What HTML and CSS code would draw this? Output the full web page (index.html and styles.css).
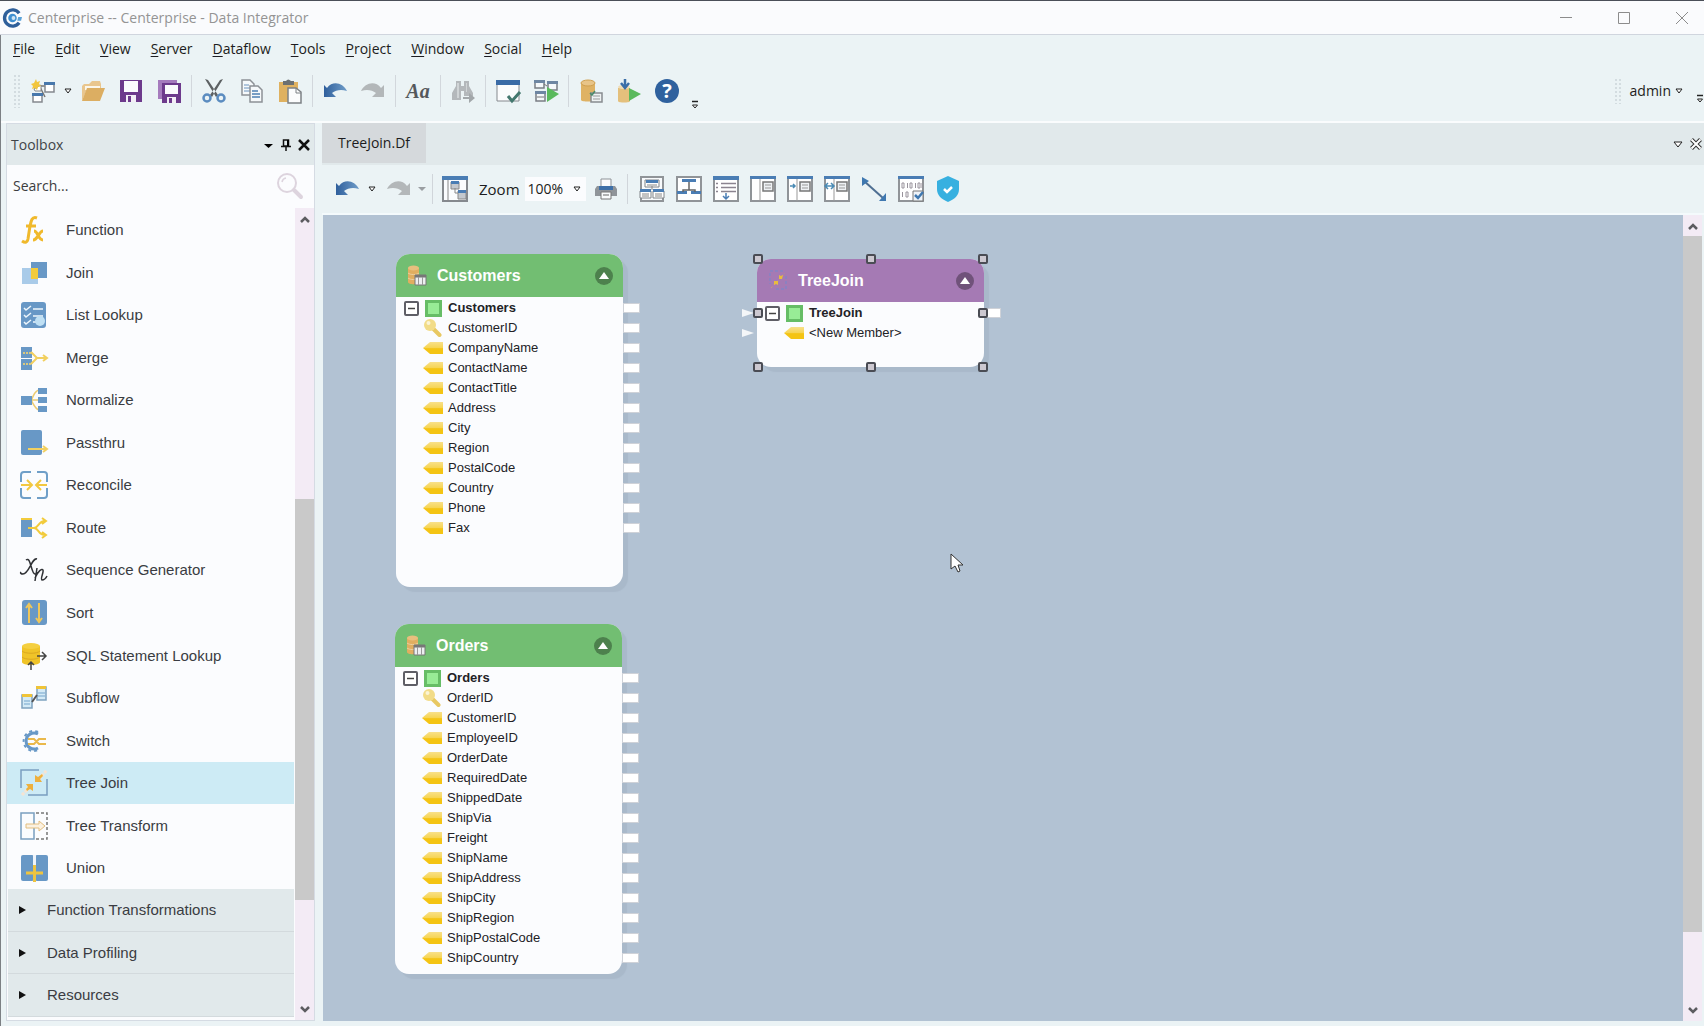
FILE: index.html
```html
<!DOCTYPE html>
<html lang="en">
<head>
<meta charset="utf-8">
<title>Centerprise - Data Integrator</title>
<link rel="stylesheet" href="styles.css">
</head>
<body>
<svg class="defs" aria-hidden="true">
  <defs>
    <linearGradient id="g-blue" x1="0" x2="1"><stop offset="0" stop-color="#2f5f9c"/><stop offset="1" stop-color="#6f9cc8"/></linearGradient>
    <linearGradient id="g-tag" x1="0" y1="0" x2="0" y2="1"><stop offset="0" stop-color="#f8e08a"/><stop offset=".5" stop-color="#f6d452"/><stop offset=".55" stop-color="#f4c414"/><stop offset="1" stop-color="#f4c414"/></linearGradient>
    <symbol id="undo" viewBox="0 0 24 24"><path d="M1 6v12h12l-4-4c4-3 9-4 15-2C20 4 10 1 4 9z" fill="url(#g-blue)"/></symbol>
    <symbol id="redo" viewBox="0 0 24 24"><path d="M23 6v12H11l4-4c-4-3-9-4-15-2C4 4 14 1 20 9z" fill="#b3b7b9"/></symbol>
    <symbol id="caret-o" viewBox="0 0 8 8"><path d="M1 2h6L4 6z" fill="#fff" stroke="#222"/></symbol>
    <symbol id="overflow" viewBox="0 0 8 10"><path d="M1 1.500h6" stroke="#222" stroke-width="1.500"/><path d="M1.500 5h5L4 8z" fill="#fff" stroke="#222"/></symbol>
    <symbol id="chev-up" viewBox="0 0 12 8"><path d="M2 7l4-4 4 4" fill="none" stroke="#5c5c60" stroke-width="2.500"/></symbol>
    <symbol id="chev-down" viewBox="0 0 12 8"><path d="M2 1l4 4 4-4" fill="none" stroke="#5c5c60" stroke-width="2.500"/></symbol>
    <symbol id="database" viewBox="0 0 24 24">
      <path d="M2 4v17c0 2 14 2 14 0V4z" fill="#dfb264"/><ellipse cx="9" cy="4" rx="7" ry="3" fill="#e8c488" stroke="#d0a050"/>
      <path d="M12 14h11v9H12z" fill="#eef2f3" stroke="#888c90" stroke-width="1.500"/><path d="M14 17h7M14 20h7" stroke="#999"/><path d="M11 14l2 2 3-4" fill="none" stroke="#4a8a6a" stroke-width="1.500"/>
    </symbol>
    <symbol id="node-db" viewBox="0 0 20 21">
      <path d="M1 3v14c0 3 11 3 11 0V3z" fill="#e0ae60"/><ellipse cx="6.500" cy="3" rx="5.500" ry="2.500" fill="#e8bf7e"/><path d="M1 8c2 2 9 2 11 0M1 13c2 2 9 2 11 0" fill="none" stroke="#ecd0a0"/>
      <path d="M8 10h11v10H8z" fill="#eceef0" stroke="#777"/><path d="M8 10h11v2.500H8z" fill="#777"/><path d="M11.500 12v8M15.500 12v8" stroke="#999"/>
    </symbol>
    <symbol id="tag" viewBox="0 0 20 12"><path d="M0 6l7-6h13v12H7z" fill="url(#g-tag)"/></symbol>
    <symbol id="key" viewBox="0 0 19 18"><path d="M9 9l7 7" stroke="#e8c862" stroke-width="4" stroke-linecap="round"/><circle cx="6.500" cy="6" r="6" fill="#f2dc88"/><circle cx="5" cy="4" r="2" fill="#fbf4d4"/></symbol>
    <symbol id="minus" viewBox="0 0 15 15"><rect x="1" y="1" width="13" height="13" rx="1" fill="#fff" stroke="#5e5e66" stroke-width="2"/><path d="M4 7.500h7" stroke="#444" stroke-width="1.500"/></symbol>
    <symbol id="square" viewBox="0 0 17 17"><path d="M0 0h17v17H0z" fill="#66bd66"/><path d="M3 3h11v11H3z" fill="#98ec96"/></symbol>
    <symbol id="up" viewBox="0 0 18 18"><circle cx="9" cy="9" r="9" fill="#000" fill-opacity=".32"/><path d="M4 12l5-7 5 7z" fill="#fff"/></symbol>
  </defs>
</svg>

<div class="app">
  <header class="titlebar">
    <svg class="logo" viewBox="0 0 20 20"><path d="M17 5A8.500 8.500 0 1 0 17 15" fill="none" stroke="#2e5f9a" stroke-width="3.500"/><circle cx="10" cy="10" r="4.500" fill="#3f8fd0"/><circle cx="11" cy="10" r="2" fill="#cfe4f4"/><path d="M16 9h4l-1 4h-4z" fill="#5aa2d8"/></svg>
    <h1>Centerprise -- Centerprise - Data Integrator</h1>
    <div class="window-buttons">
      <button aria-label="Minimize"><svg viewBox="0 0 12 12"><path d="M0 5.500h12"/></svg></button>
      <button aria-label="Maximize"><svg viewBox="0 0 12 12"><path d="M.500.500h11v11H.500z"/></svg></button>
      <button aria-label="Close"><svg viewBox="0 0 12 12"><path d="M0 0l12 12M12 0L0 12"/></svg></button>
    </div>
  </header>

  <div class="shell">
    <nav class="menu">
      <button><u>F</u>ile</button><button><u>E</u>dit</button><button><u>V</u>iew</button><button><u>S</u>erver</button><button><u>D</u>ataflow</button><button><u>T</u>ools</button><button><u>P</u>roject</button><button><u>W</u>indow</button><button><u>S</u>ocial</button><button><u>H</u>elp</button>
    </nav>

    <div class="toolbar">
      <span class="grip"></span>
      <div class="group">
        <button class="tool" aria-label="New dataflow"><svg viewBox="0 0 24 24"><path d="M10 7l5 0M8 6l6 12" stroke="#777" stroke-width="1.500"/><path d="M14 4h9v9h-9zM2 15h9v8H2z" fill="#fff" stroke="#85898e" stroke-width="1.500"/><path d="M13 3h11v3H13zM1 14h11v3H1z" fill="#4878ac"/><path d="M3 10l1 2h6V6z" fill="#fff" stroke="#888"/><path d="M5 0l1 3 3-1-1 3 2 2-3 1-1 3-2-2-3 1 1-3-2-2 3-1z" fill="#f2c63e"/></svg></button>
        <button class="drop" aria-label="New options"><svg><use href="#caret-o"/></svg></button>
        <button class="tool" aria-label="Open"><svg viewBox="0 0 24 24"><path d="M1 22V7l2-2h5l3-3h8l1 3v5H6z" fill="#e9c68e"/><path d="M4 7h15v4H4z" fill="#fbf6ea"/><path d="M1 22L6 9h18l-5 13z" fill="#dcae62"/></svg></button>
        <button class="tool" aria-label="Save"><svg viewBox="0 0 24 24"><path d="M1 1h22v22H1z" fill="#6d3a8c"/><path d="M5 2h14v11H5z" fill="#fbfbfd"/><path d="M7 16h10v7H7z" fill="#f3eef6"/><path d="M9 17h3v6H9z" fill="#6d3a8c"/></svg></button>
        <button class="tool" aria-label="Save all"><svg viewBox="0 0 24 24"><path d="M1 1h19v19H1z" fill="#a57bbd"/><path d="M5 4h19v20H5z" fill="#6d3a8c"/><path d="M8 6h13v9H8z" fill="#fbfbfd"/><path d="M10 18h9v6h-9z" fill="#f3eef6"/><path d="M12 19h3v5h-3z" fill="#6d3a8c"/></svg></button>
      </div>
      <div class="group">
        <button class="tool" aria-label="Cut"><svg viewBox="0 0 24 24"><path d="M3 0l3 1 10 15-2 2zM21 0l-3 1L8 16l2 2z" fill="#5d6163"/><circle cx="5" cy="19" r="3.500" fill="none" stroke="#5b8cc0" stroke-width="2.500"/><circle cx="19" cy="19" r="3.500" fill="none" stroke="#5b8cc0" stroke-width="2.500"/></svg></button>
        <button class="tool" aria-label="Copy"><svg viewBox="0 0 24 24"><path d="M2 1h8l4 4v11H2z" fill="#f6f9fb" stroke="#8d9196" stroke-width="1.500"/><path d="M4 6h5M4 9h8M4 12h8" stroke="#6a92bd"/><path d="M10 7h8l4 4v12H10z" fill="#f6f9fb" stroke="#8d9196" stroke-width="1.500"/><path d="M12 12h6M12 15h8M12 18h8" stroke="#4f80b4" stroke-width="1.500"/></svg></button>
        <button class="tool" aria-label="Paste"><svg viewBox="0 0 24 24"><path d="M1 3h19v20H1z" fill="#dfb160"/><path d="M5 2h3q2-3 5 0h3v4H5z" fill="#6c7072"/><path d="M10 9h8l5 4v11H10z" fill="#fbfcfd" stroke="#7d8185" stroke-width="1.500"/><path d="M18 9v5h5" fill="none" stroke="#7d8185"/></svg></button>
      </div>
      <div class="group">
        <button class="tool" aria-label="Undo"><svg><use href="#undo"/></svg></button>
        <button class="tool" aria-label="Redo"><svg><use href="#redo"/></svg></button>
      </div>
      <div class="group"><button class="tool font-tool">Aa</button></div>
      <div class="group">
        <button class="tool" aria-label="Find"><svg viewBox="0 0 24 24"><path d="M5 2h5v5h3V2h5v5l4 7v3H13v-5h-3v9H1v-7l4-7z" fill="#b4b8bb"/><path d="M6 4h2v15H6zM15 4h1v9h-1z" fill="#d0d4d6"/><path d="M12 18h6v-4l6 5-6 5v-4h-6z" fill="#a2a7aa"/></svg></button>
      </div>
      <div class="group">
        <button class="tool" aria-label="Verify"><svg viewBox="0 0 24 24"><path d="M1 2h22v20H1z" fill="#fbfcfd" stroke="#85898e"/><path d="M0 1h24v5H0z" fill="#3a6ba6"/><path d="M12 17l4 5 8-9" fill="none" stroke="#44786f" stroke-width="3"/></svg></button>
        <button class="tool" aria-label="Start dataflow"><svg viewBox="0 0 24 24"><path d="M1 2h9v7H1zM14 3h9v8h-9zM2 13h9v9H2z" fill="#f5f8fa" stroke="#7a7e84" stroke-width="1.500"/><path d="M0 1h11v3H0zM13 2h11v3H13zM1 12h11v3H1z" fill="#6e86a2"/><path d="M3 18h7M10 5l3 2" stroke="#777"/><path d="M13 8l12 7-12 8z" fill="#5ab95c"/></svg></button>
      </div>
      <div class="group last">
        <button class="tool" aria-label="Data source"><svg><use href="#database"/></svg></button>
        <button class="tool" aria-label="Generate job"><svg viewBox="0 0 24 24"><path d="M1 9v13c0 2 12 2 12 0V9z" fill="#e4c07c"/><ellipse cx="7" cy="8" rx="6" ry="2" fill="#f0dcb4"/><path d="M8 0v7M4 4l4 5 4-5" fill="none" stroke="#3a6ea8" stroke-width="2.500"/><path d="M12 9l12 6-12 7z" fill="#5ab95c"/></svg></button>
        <button class="tool help" aria-label="Help">?</button>
      </div>
      <button class="more" aria-label="More tools"><svg><use href="#overflow"/></svg></button>
      <div class="user">
        <span class="grip"></span>
        <button class="user-name">admin <svg><use href="#caret-o"/></svg></button>
        <button class="more" aria-label="More options"><svg><use href="#overflow"/></svg></button>
      </div>
    </div>

    <main class="work">
      <aside class="toolbox">
        <div class="panel-head">
          <h2>Toolbox</h2>
          <button aria-label="Panel menu"><svg viewBox="0 0 12 12"><path d="M2 5h9l-4.500 4z"/></svg></button>
          <button aria-label="Pin"><svg viewBox="0 0 12 12"><path d="M3.500 1h5v6h-5zM1 7.500h10M6 7v5" fill="none" stroke="#111" stroke-width="1.500"/><path d="M7 1h2v6H7z"/></svg></button>
          <button aria-label="Close panel"><svg viewBox="0 0 12 12"><path d="M1 1l10 10M11 1L1 11" stroke="#111" stroke-width="2.500"/></svg></button>
        </div>
        <label class="search"><input type="text" aria-label="Search tools" placeholder="Search...">
          <svg viewBox="0 0 28 28"><circle cx="11" cy="11" r="9" fill="none" stroke="#ddd4de" stroke-width="2"/><path d="M6 10a5 5 0 0 1 4-4" fill="none" stroke="#ddd4de" stroke-width="1.500"/><path d="M18 18l7 7" stroke="#ddd4de" stroke-width="4" stroke-linecap="round"/></svg>
        </label>
        <div class="tree">
          <div class="rows">
            <button class="item"><svg viewBox="0 0 28 28"><path d="M17 2c-5-2-6 3-7 8L8 23c-1 4-3 4-6 2M6 10h10" fill="none" stroke="#f0b92c" stroke-width="3"/><path d="M14 15c4 0 4 9 9 9M23 15c-4 0-5 9-10 9" fill="none" stroke="#f0b92c" stroke-width="3"/></svg>Function</button>
            <button class="item"><svg viewBox="0 0 28 28"><path d="M11 3h16v16H11z" fill="#6898c6"/><path d="M2 9h16v16H2z" fill="#a9cbe9"/><path d="M11 9h7v11h-7z" fill="#f2cb3c"/></svg>Join</button>
            <button class="item"><svg viewBox="0 0 28 28"><rect x="1" y="1" width="25" height="26" rx="3" fill="#6898c6"/><path d="M4 7l2 2 5-4M4 14l2 2 5-4M4 21l2 2 5-4M13 8h10M13 15h10M13 21h5" fill="none" stroke="#eef6fc" stroke-width="1.500"/><circle cx="20" cy="20" r="5" fill="#bfe0f4"/></svg>List Lookup</button>
            <button class="item"><svg viewBox="0 0 28 28"><path d="M1 3h11v11H1zM1 15h11v11H1z" fill="#6898c6"/><path d="M11 8l6 6h10M11 20l6-6M23 11l4 3-4 3" fill="none" stroke="#f2d060" stroke-width="2"/><path d="M3 9h8M3 20h8" stroke="#d8c880" stroke-width="2" stroke-dasharray="2 1"/></svg>Merge</button>
            <button class="item"><svg viewBox="0 0 28 28"><path d="M19 4c-5 1-5 6-8 10 3 5 4 9 8 10M11 14h8" fill="none" stroke="#eccb70" stroke-width="1.500"/><path d="M1 10h11v9H1zM18 2h9v6h-9zM18 11h9v6h-9zM18 20h9v6h-9z" fill="#6898c6"/></svg>Normalize</button>
            <button class="item"><svg viewBox="0 0 28 28"><rect x="1" y="1" width="21" height="25" rx="2" fill="#6898c6"/><path d="M8 20h19M23 17l4 3-4 3" fill="none" stroke="#f2d060" stroke-width="2"/></svg>Passthru</button>
            <button class="item"><svg viewBox="0 0 28 28"><path d="M11 1H4Q1 1 1 4v7M17 1h7q3 0 3 3v7M11 27H4q-3 0-3-3v-7M17 27h7q3 0 3-3v-7" fill="none" stroke="#6f9fc8" stroke-width="2"/><path d="M1 14h10M7 9l5 5-5 5M27 14H17M21 9l-5 5 5 5" fill="none" stroke="#f2c840" stroke-width="2"/></svg>Reconcile</button>
            <button class="item"><svg viewBox="0 0 28 28"><path d="M1 5h11v18H1z" fill="#6898c6"/><path d="M1 5h11" stroke="#f2cb3c" stroke-width="2"/><path d="M8 14h6c5 0 4-7 11-7M14 14c5 0 4 7 11 7M22 4l4 3-4 3M22 18l4 3-4 3" fill="none" stroke="#f2cb3c" stroke-width="2"/></svg>Route</button>
            <button class="item"><svg viewBox="0 0 28 28"><path d="M6 4c5-4 5 14 9 14 1 0 2-1 2-2M17 3c-5-2-8 15-14 15-2 0-3-1-2-2M17 12l-2 13M15 22c3-7 7-10 8-8s-3 9-1 10c2 0 4-2 5-4" fill="none" stroke="#303236" stroke-width="1.500"/></svg>Sequence Generator</button>
            <button class="item"><svg viewBox="0 0 28 28"><rect x="2" y="1" width="25" height="25" rx="3" fill="#6898c6"/><path d="M9 24V6M6 9l3-4 3 4M19 4v18M16 19l3 4 3-4" fill="none" stroke="#eec65a" stroke-width="2"/></svg>Sort</button>
            <button class="item"><svg viewBox="0 0 28 28"><path d="M2 4v16c0 4 18 4 18 0V4z" fill="#f0c428"/><ellipse cx="11" cy="4" rx="9" ry="3" fill="#f4cf40"/><path d="M2 9c3 3 15 3 18 0M2 15c3 3 15 3 18 0" fill="none" stroke="#dba820"/><path d="M17 14h8M22 10l4 4-4 4M11 28v-7M8 23l3-3 3 3" fill="none" stroke="#444" stroke-width="1.500"/></svg>SQL Statement Lookup</button>
            <button class="item"><svg viewBox="0 0 28 28"><path d="M17 3h9v13h-9zM2 11h10v13H2z" fill="#d4eaf6" stroke="#7fa2c0" stroke-width="1.500"/><path d="M16 2h10v3H16zM2 10h10v3H2z" fill="#f0c438"/><path d="M18 9h7M18 12h7M4 17h6M4 20h6" stroke="#74a5cc"/><path d="M12 18l5-7" stroke="#555" stroke-width="2"/></svg>Subflow</button>
            <button class="item"><svg viewBox="0 0 28 28"><path d="M18 7a8 8 0 1 0 0 14" fill="none" stroke="#6898c6" stroke-width="3"/><path d="M18 5a10 10 0 1 0 0 18" fill="none" stroke="#6898c6" stroke-width="2" stroke-dasharray="3 3"/><path d="M8 12h6l5 5h7M8 17h6l5-5h7" fill="none" stroke="#eab94c" stroke-width="2"/></svg>Switch</button>
            <button class="item selected"><svg viewBox="0 0 28 28"><path d="M19 1H1v18M27 10v16H8" fill="none" stroke="#7a9fc0" stroke-width="1.500"/><path d="M2 26l8-8M19 10l8-9" stroke="#f6e4d2" stroke-width="3" stroke-dasharray="3 1"/><path d="M6 15h7v7l-3-2-3 2-1-2 2-2zM15 13V6l3 2 4-3 1 2-3 3 2 3z" fill="#eeb03c"/></svg>Tree Join</button>
            <button class="item"><svg viewBox="0 0 28 28"><path d="M1 1h13v26H1z" fill="#fafcfe" stroke="#7a9fc0" stroke-width="1.500"/><path d="M16 1h11v26H15" fill="none" stroke="#777" stroke-width="1.500" stroke-dasharray="3 2"/><path d="M6 12h13V9l6 5-6 5v-3H6z" fill="#fbf1e0" stroke="#e2be80"/></svg>Tree Transform</button>
            <button class="item"><svg viewBox="0 0 28 28"><rect x="1" y="1" width="13" height="26" rx="2" fill="#6898c6"/><rect x="15" y="1" width="13" height="26" rx="2" fill="#6898c6"/><path d="M13 1h3v13h-3z" fill="#eef4fa"/><path d="M6 19h17M14.500 11v17" stroke="#eec440" stroke-width="3"/></svg>Union</button>
            <button class="section"><svg viewBox="0 0 7 8"><path d="M0 0l7 4-7 4z"/></svg>Function Transformations</button>
            <button class="section"><svg viewBox="0 0 7 8"><path d="M0 0l7 4-7 4z"/></svg>Data Profiling</button>
            <button class="section"><svg viewBox="0 0 7 8"><path d="M0 0l7 4-7 4z"/></svg>Resources</button>
          </div>
          <div class="scroll side">
            <svg><use href="#chev-up"/></svg><div class="track"><div class="thumb"></div></div><svg><use href="#chev-down"/></svg>
          </div>
        </div>
      </aside>

      <section class="document">
        <div class="tabs">
          <button class="tab">TreeJoin.Df</button>
          <div class="tab-tools">
            <button aria-label="Window list"><svg viewBox="0 0 12 12"><path d="M2 4h8L6 9z" fill="#fff" stroke="#222"/></svg></button>
            <button aria-label="Close tab"><svg viewBox="0 0 12 12"><path d="M1.500 1.500l9 9M10.500 1.500l-9 9" stroke="#333" stroke-width="4"/><path d="M1.500 1.500l9 9M10.500 1.500l-9 9" stroke="#fff" stroke-width="2"/></svg></button>
          </div>
        </div>
        <div class="flowbar">
          <button class="tool" aria-label="Undo"><svg><use href="#undo"/></svg></button>
          <button class="drop" aria-label="Undo history"><svg><use href="#caret-o"/></svg></button>
          <button class="tool" aria-label="Redo"><svg><use href="#redo"/></svg></button>
          <button class="drop muted" aria-label="Redo history"><svg viewBox="0 0 8 8"><path d="M0 2h8L4 6z"/></svg></button>
          <i class="rule"></i>
          <button class="tool wide" aria-label="Overview"><svg viewBox="0 0 26 26"><path d="M1 1h24v24H1z" fill="#fafcfe" stroke="#85898e" stroke-width="2"/><path d="M0 0h26v4H0z" fill="#4a7db4"/><path d="M6 4v21" stroke="#888"/><path d="M9 6h8v7H9zM16 15h8v8h-8z" fill="#c3c8ce" stroke="#888"/><path d="M9 5h8v3H9zM16 14h8v3h-8z" fill="#4a7db4"/><path d="M13 12v5h3" fill="none" stroke="#888"/></svg></button>
          <label class="zoom-label" for="zoom">Zoom</label>
          <span class="zoom"><select id="zoom"><option>100%</option></select><svg><use href="#caret-o"/></svg></span>
          <button class="tool" aria-label="Print"><svg viewBox="0 0 24 24"><path d="M7 2h10v9H7z" fill="#fafcfd" stroke="#8f9398"/><path d="M3 9h18l2 3v7H1v-7z" fill="#8f9499"/><path d="M5 9h14v4H5z" fill="#3e70a8"/><path d="M7 15h10v7H7z" fill="#fafcfd" stroke="#777"/><path d="M9 18h6" stroke="#666"/></svg></button>
          <i class="rule"></i>
          <div class="views">
            <button class="tool wide" aria-label="Layout"><svg viewBox="0 0 26 26"><path d="M2 1h22v24H2z" fill="#f8fafc" stroke="#909498" stroke-width="2"/><path d="M6 4h14v7H6zM1 15h11v7H1zM14 15h11v7H14z" fill="#fff" stroke="#808488"/><path d="M7 4h12v3H7zM1 13h11v3H1zM14 13h11v3H14z" fill="#4a7db4"/><path d="M3 18h7M3 20h7M16 18h7M16 20h7M8 9h10M13 10v4" stroke="#888"/></svg></button>
            <button class="tool wide" aria-label="Hierarchy"><svg viewBox="0 0 26 26"><path d="M1 1h24v24H1z" fill="#fff" stroke="#909498" stroke-width="2"/><path d="M6 3h14v3H6zM1 15h10v3H1zM15 15h10v3H15z" fill="#4a7db4"/><path d="M13 6v8M7 16v-2h12v2" fill="none" stroke="#666" stroke-width="1.500"/></svg></button>
            <button class="tool wide" aria-label="Expand list"><svg viewBox="0 0 26 26"><path d="M1 1h24v24H1z" fill="#fff" stroke="#909498" stroke-width="2"/><path d="M0 0h26v4H0z" fill="#4a7db4"/><path d="M3 7.500h2M3 11.500h2M3 15.500h2M8 7.500h15M8 11.500h15M8 15.500h15" stroke="#8b8490" stroke-width="1.500"/><path d="M13 17v6M10 20l3 3 3-3" fill="none" stroke="#4a7db4" stroke-width="1.500"/></svg></button>
            <button class="tool wide" aria-label="Panel view"><svg viewBox="0 0 26 26"><path d="M1 1h24v24H1z" fill="#fff" stroke="#909498" stroke-width="2"/><path d="M0 0h26v3H0z" fill="#4a7db4"/><path d="M10 3v22" stroke="#999"/><path d="M13 6h10v9H13z" fill="#eef1f4" stroke="#777" stroke-width="1.500"/><path d="M15 9h6M15 12h6" stroke="#999"/></svg></button>
            <button class="tool wide" aria-label="Expand panel"><svg viewBox="0 0 26 26"><path d="M1 1h24v24H1z" fill="#fff" stroke="#909498" stroke-width="2"/><path d="M0 0h26v3H0z" fill="#4a7db4"/><path d="M10 3v22" stroke="#999"/><path d="M13 6h10v9H13z" fill="#eef1f4" stroke="#777" stroke-width="1.500"/><path d="M15 9h6M15 12h6" stroke="#999"/><path d="M3 10h5M6 8l2 2-2 2" fill="none" stroke="#4a8ab4" stroke-width="1.500"/></svg></button>
            <button class="tool wide" aria-label="Fit panel"><svg viewBox="0 0 26 26"><path d="M1 1h24v24H1z" fill="#fff" stroke="#909498" stroke-width="2"/><path d="M0 0h26v3H0z" fill="#4a7db4"/><path d="M10 3v22" stroke="#999"/><path d="M13 6h10v9H13z" fill="#eef1f4" stroke="#777" stroke-width="1.500"/><path d="M15 9h6M15 12h6" stroke="#999"/><path d="M1 10h8M4 7l-3 3 3 3M7 7l3 3-3 3" fill="none" stroke="#4a8ab4" stroke-width="1.500"/></svg></button>
            <button class="tool wide" aria-label="Connector"><svg viewBox="0 0 26 26"><path d="M3 5l19 17" stroke="#4f6f92" stroke-width="2"/><path d="M1 1l7 4-7 5zM25 17v8h-7z" fill="#3f78b0"/></svg></button>
            <button class="tool wide" aria-label="Data preview"><svg viewBox="0 0 26 26"><path d="M1 1h24v24H1z" fill="#fff" stroke="#909498" stroke-width="2"/><path d="M0 0h26v3H0z" fill="#4a7db4"/><path d="M4 7h2v5H4zM12 7h2v5h-2zM20 7h2v5h-2zM8 16h2v5H8z" fill="none" stroke="#99939c"/><path d="M9.500 7v5M17.500 7v5M24 7v5M4.500 16v5" stroke="#99939c"/><path d="M15 15h10v10H15z" fill="#eef3f8" stroke="#777"/><path d="M17 19l3 3 5-6" fill="none" stroke="#3f78b0" stroke-width="2.500"/></svg></button>
            <button class="tool wide" aria-label="Data quality"><svg viewBox="0 0 26 26"><path d="M13 0l11 5v8c0 6-4 10-11 13C6 23 2 19 2 13V5z" fill="#37b0e0"/><path d="M9 13l3 3 5-5" fill="none" stroke="#fff" stroke-width="2.500"/></svg></button>
          </div>
        </div>

        <div class="stage">
          <div class="canvas">
            <article class="node customers">
              <header><svg class="kind"><use href="#node-db"/></svg><h3>Customers</h3><button aria-label="Collapse Customers"><svg><use href="#up"/></svg></button></header>
              <ul>
                <li class="root port"><svg class="toggle"><use href="#minus"/></svg><svg class="sq"><use href="#square"/></svg>Customers</li>
                <li class="port"><svg class="key"><use href="#key"/></svg>CustomerID</li>
                <li class="port"><svg class="tag"><use href="#tag"/></svg>CompanyName</li>
                <li class="port"><svg class="tag"><use href="#tag"/></svg>ContactName</li>
                <li class="port"><svg class="tag"><use href="#tag"/></svg>ContactTitle</li>
                <li class="port"><svg class="tag"><use href="#tag"/></svg>Address</li>
                <li class="port"><svg class="tag"><use href="#tag"/></svg>City</li>
                <li class="port"><svg class="tag"><use href="#tag"/></svg>Region</li>
                <li class="port"><svg class="tag"><use href="#tag"/></svg>PostalCode</li>
                <li class="port"><svg class="tag"><use href="#tag"/></svg>Country</li>
                <li class="port"><svg class="tag"><use href="#tag"/></svg>Phone</li>
                <li class="port"><svg class="tag"><use href="#tag"/></svg>Fax</li>
              </ul>
            </article>

            <article class="node orders">
              <header><svg class="kind"><use href="#node-db"/></svg><h3>Orders</h3><button aria-label="Collapse Orders"><svg><use href="#up"/></svg></button></header>
              <ul>
                <li class="root port"><svg class="toggle"><use href="#minus"/></svg><svg class="sq"><use href="#square"/></svg>Orders</li>
                <li class="port"><svg class="key"><use href="#key"/></svg>OrderID</li>
                <li class="port"><svg class="tag"><use href="#tag"/></svg>CustomerID</li>
                <li class="port"><svg class="tag"><use href="#tag"/></svg>EmployeeID</li>
                <li class="port"><svg class="tag"><use href="#tag"/></svg>OrderDate</li>
                <li class="port"><svg class="tag"><use href="#tag"/></svg>RequiredDate</li>
                <li class="port"><svg class="tag"><use href="#tag"/></svg>ShippedDate</li>
                <li class="port"><svg class="tag"><use href="#tag"/></svg>ShipVia</li>
                <li class="port"><svg class="tag"><use href="#tag"/></svg>Freight</li>
                <li class="port"><svg class="tag"><use href="#tag"/></svg>ShipName</li>
                <li class="port"><svg class="tag"><use href="#tag"/></svg>ShipAddress</li>
                <li class="port"><svg class="tag"><use href="#tag"/></svg>ShipCity</li>
                <li class="port"><svg class="tag"><use href="#tag"/></svg>ShipRegion</li>
                <li class="port"><svg class="tag"><use href="#tag"/></svg>ShipPostalCode</li>
                <li class="port"><svg class="tag"><use href="#tag"/></svg>ShipCountry</li>
              </ul>
            </article>

            <article class="node treejoin">
              <header><svg class="kind" viewBox="0 0 20 21"><path d="M15 1H2v13M18 6v13H6" fill="none" stroke="#8484c4" stroke-width="1.500" stroke-dasharray="3 2"/><path d="M3 18l14-15" stroke="#c89a78" stroke-dasharray="2 2"/><path d="M6 11h4v4l-2-1-2 1zM11 9V5l2 1 2-1-1 4z" fill="#e8bc3e"/></svg><h3>TreeJoin</h3><button aria-label="Collapse TreeJoin"><svg><use href="#up"/></svg></button></header>
              <ul>
                <li class="root port in"><svg class="toggle"><use href="#minus"/></svg><svg class="sq"><use href="#square"/></svg>TreeJoin</li>
                <li class="in"><svg class="tag"><use href="#tag"/></svg>&lt;New Member&gt;</li>
              </ul>
              <i class="handle t l"></i><i class="handle t c"></i><i class="handle t r"></i>
              <i class="handle m l"></i><i class="handle m r"></i>
              <i class="handle b l"></i><i class="handle b c"></i><i class="handle b r"></i>
            </article>

            <svg class="cursor" viewBox="0 0 14 20"><path d="M1 1v15l4-3 3 6 2-1-2-6h5z" fill="#fff" stroke="#333"/></svg>
          </div>
          <div class="scroll main">
            <svg><use href="#chev-up"/></svg><div class="track"><div class="thumb"></div></div><svg><use href="#chev-down"/></svg>
          </div>
        </div>
      </section>
    </main>
  </div>
</div>
</body>
</html>
```
FILE: styles.css
```css
* { box-sizing: border-box; }

body {
  margin: 0;
  padding-right: 4px;
  background: #fff;
  color: #1c1c20;
  font: 14px/20px "Open Sans", "Noto Sans", sans-serif;
}

button, input, select {
  margin: 0;
  padding: 0;
  border: 0;
  background: none;
  color: inherit;
  font: inherit;
}

h1, h2, h3, ul { margin: 0; padding: 0; font: inherit; }
ul { list-style: none; }
svg { display: block; flex: none; overflow: visible; }
.defs { position: absolute; width: 0; height: 0; }

.app { display: flex; flex-direction: column; min-height: 100vh; }

/* Title bar */
.titlebar {
  display: flex;
  align-items: center;
  gap: 6px;
  height: 35px;
  padding: 0 16px 0 3px;
  border-top: 1px solid #4a4f58;
  border-bottom: 1px solid #d0d5de;
  background: #fafbfd;
  color: #949494;
}
.logo { width: 19px; height: 20px; }
.window-buttons { display: flex; gap: 46px; margin-left: auto; }
.window-buttons svg { width: 12px; height: 12px; fill: none; stroke: #8c8c8c; }

.shell {
  display: flex;
  flex: 1;
  flex-direction: column;
  border-left: 1px solid #7c8084;
  background: #ebf3f5;
}

.menu { display: flex; gap: 20px; padding: 4px 12px; }
.menu u { text-underline-offset: 2px; }

/* Main toolbar */
.toolbar {
  display: flex;
  align-items: center;
  height: 60px;
  padding: 0 0 3px 12px;
  border-bottom: 2px solid #fafcfd;
}
.grip {
  width: 8px;
  height: 34px;
  background: radial-gradient(circle, #d3dce0 1px, transparent 1px) 0 0 / 4px 4px;
}
.group {
  display: flex;
  align-items: center;
  gap: 14px;
  margin-right: 10px;
  padding-right: 10px;
  height: 32px;
  border-right: 1px solid #d2d7dc;
}
.grip + .group { margin-left: 10px; }
.group.last { margin-right: 2px; border: 0; }
.tool { display: flex; align-items: center; justify-content: center; width: 24px; height: 24px; }
.tool svg { width: 24px; height: 24px; }
.wide, .wide svg { width: 26px; height: 26px; }
.drop { width: 8px; }
.drop svg, .user-name svg { width: 8px; height: 8px; }
.group .drop { margin: 0 -5px; }
.muted svg { fill: #9a9ea2; }
.font-tool { color: #55585c; font: italic bold 20px/24px "Liberation Serif", serif; }
.help { border-radius: 50%; background: #2f619e; color: #fff; font: bold 20px/24px "Open Sans", sans-serif; }
.more { align-self: flex-end; margin-bottom: 8px; }
.more svg { width: 8px; height: 10px; }
.user { display: flex; align-items: center; align-self: stretch; margin-left: auto; }
.user .grip { margin-right: 8px; height: 26px; }
.user-name { display: flex; align-items: center; gap: 4px; margin-right: 13px; }
.user .more { margin-bottom: 14px; }

/* Work area */
.work { display: flex; flex: 1; gap: 7px; padding: 0 0 5px 5px; }

.toolbox {
  display: flex;
  flex: 0 0 309px;
  flex-direction: column;
  border: 1px solid #d5dbe3;
  background: #fbfcfe;
}
.panel-head {
  display: flex;
  align-items: center;
  gap: 6px;
  height: 41px;
  padding: 0 4px;
  background: #e1e9eb;
  color: #404448;
}
.panel-head h2 { margin-right: auto; }
.panel-head svg, .tab-tools svg { width: 12px; height: 12px; }
.search { display: flex; align-items: center; height: 43px; padding: 0 10px 2px 6px; }
.search input { flex: 1; min-width: 0; outline: 0; }
.search input::placeholder { color: #3c3c40; opacity: 1; }
.search svg { width: 28px; height: 28px; }
.tree { display: flex; flex: 1; }
.rows {
  display: grid;
  flex: 1;
  grid-auto-rows: 1fr;
  padding: 1px 1px 3px 0;
  font: 15px/18px "Liberation Sans", Arial, sans-serif;
}
.item, .section { display: flex; align-items: center; text-align: left; color: #3a3c42; }
.item { gap: 18px; padding-left: 13px; }
.item svg { width: 28px; height: 28px; }
.selected { background: #cdebf5; }
.section { gap: 21px; margin-left: 1px; padding-left: 11px; border-bottom: 1px solid #d3dadd; background: #e1e9eb; }
.section svg { width: 7px; height: 8px; fill: #111; }

.scroll {
  display: flex;
  flex: 0 0 19px;
  flex-direction: column;
  align-items: center;
  padding: 7px 0 6px;
  background: #f3ebf5;
}
.scroll svg { width: 12px; height: 8px; }
.track { display: flex; flex: 1; flex-direction: column; align-self: stretch; padding: 6px 0; }
.thumb { background: #c9c9c9; }
.side .thumb { height: 52%; margin-top: 270px; }
.main .thumb { height: 91%; }

/* Document */
.document { display: flex; flex: 1; flex-direction: column; min-width: 0; }
.tabs { display: flex; height: 42px; background: #e1e9eb; }
.tab { height: 40px; padding: 0 16px; background: #d5d9dc; }
.tab-tools { display: flex; align-items: center; gap: 6px; margin-left: auto; padding-right: 2px; }
.flowbar {
  display: flex;
  align-items: center;
  height: 50px;
  padding-left: 13px;
  border-bottom: 2px solid #f4fafc;
}
.flowbar > .drop { margin: 0 11px 0 9px; }
.flowbar > .drop.muted { margin: 0 6px 0 7px; }
.rule { width: 1px; height: 30px; background: #d0d5da; }
.rule + .wide { margin: 0 11px 0 9px; }
.zoom-label { font-size: 15px; }
.zoom { display: flex; align-items: center; width: 61px; height: 24px; margin: 0 8px 0 5px; padding: 0 5px 0 3px; background: #fbfcfe; }
.zoom select { flex: 1; min-width: 0; appearance: none; }
.zoom svg { width: 8px; height: 8px; }
.flowbar > .rule:nth-last-child(2) { margin-left: 9px; }
.views { display: flex; gap: 11px; margin-left: 11px; }

.stage { display: flex; flex: 1; padding: 0 2px 0 1px; }
.canvas { position: relative; flex: 1; overflow: hidden; background: #b2c2d3; }

.node {
  position: absolute;
  width: 227px;
  border-radius: 14px;
  background: #fbfcfe;
  box-shadow: 5px 5px 1px #a9b9ca;
  color: #222226;
  font: 13px/20px "Liberation Sans", Arial, sans-serif;
}
.customers { left: 73px; top: 39px; height: 333px; }
.orders { left: 72px; top: 409px; height: 350px; }
.treejoin { left: 434px; top: 44px; height: 108px; }
.node header {
  display: flex;
  align-items: center;
  gap: 10px;
  height: 43px;
  padding: 0 10px 0 11px;
  border-radius: 14px 14px 0 0;
  background: #72be72;
  color: #fff;
  font: bold 16px/20px "Liberation Sans", Arial, sans-serif;
}
.treejoin header { background: #a57ab4; }
.node h3 { flex: 1; }
.kind { width: 20px; height: 21px; }
.node header button svg { width: 18px; height: 18px; }
.node ul { padding-top: 1px; }
.node li { position: relative; display: flex; align-items: center; gap: 5px; padding-left: 27px; }
.node .root { gap: 6px; padding-left: 8px; font-weight: bold; }
.toggle { width: 15px; height: 15px; }
.sq { width: 17px; height: 17px; }
.tag { width: 20px; height: 12px; }
.key { width: 20px; height: 18px; }
.port::after {
  position: absolute;
  left: 100%;
  width: 15px;
  height: 8px;
  border: 1px solid #cfd2d8;
  background: #fff;
  content: "";
}
.in::before {
  position: absolute;
  right: 100%;
  margin-right: 3px;
  border: solid transparent;
  border-width: 4px 0 4px 12px;
  border-left-color: #f4f6f8;
  content: "";
}
.handle { position: absolute; width: 10px; height: 10px; border: 2px solid #4a4c54; border-radius: 2px; background: #ccc8d0; }
.t { top: -5px; }
.m { top: 49px; }
.b { bottom: -5px; }
.l { left: -4px; }
.c { left: 109px; }
.r { right: -4px; }
.cursor { position: absolute; left: 627px; top: 338px; width: 14px; height: 20px; }
```
